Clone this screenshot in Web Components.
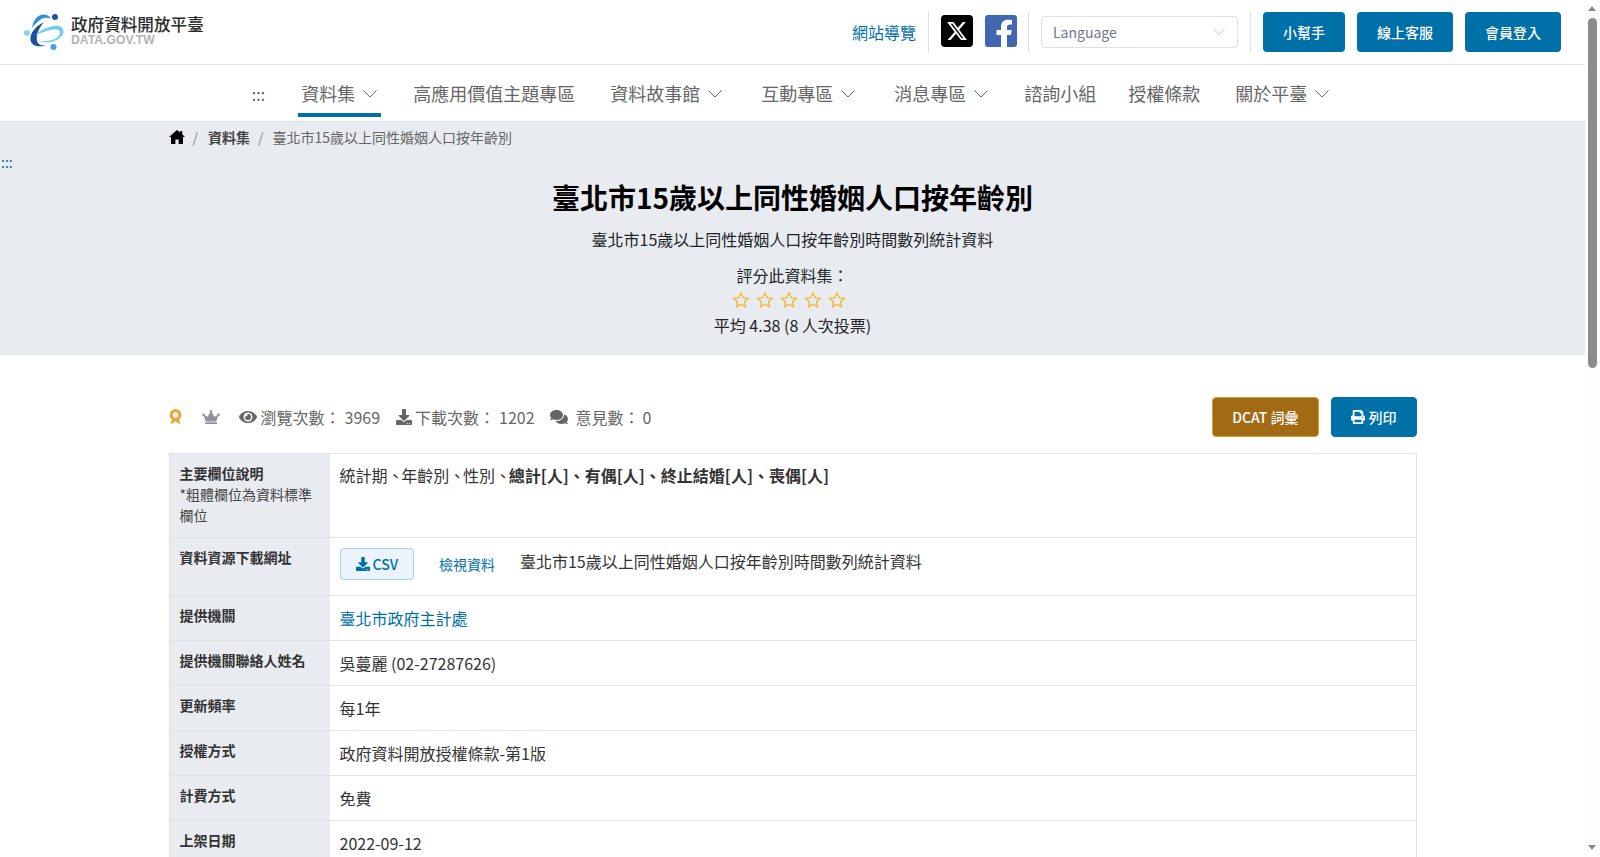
<!DOCTYPE html>
<html lang="zh-Hant"><head><meta charset="utf-8"><title>臺北市15歲以上同性婚姻人口按年齡別</title>
<style>
body{margin:0;padding-right:15px;font-family:"Noto Sans CJK TC","Noto Sans",sans-serif;color:#212529;background:#fff;font-size:16px}
</style></head><body>
<site-header></site-header>
<main-nav></main-nav>
<page-hero></page-hero>
<data-detail></data-detail>
<page-scrollbar></page-scrollbar>
<script>
const F='"Noto Sans CJK TC","Noto Sans",sans-serif';
const I={
 home:['0 0 16 14','M8 0l3.200 2.600V1h2v3.200L16 7h-2v7H9.600V9.400H6.400V14H2V7H0z'],
 eye:['0 0 576 512','M572.52 241.4C518.29 135.59 410.93 64 288 64S57.68 135.64 3.48 241.41a32.35 32.35 0 0 0 0 29.19C57.71 376.41 165.07 448 288 448s230.32-71.64 284.52-177.41a32.35 32.35 0 0 0 0-29.19zM288 400a144 144 0 1 1 144-144 143.93 143.93 0 0 1-144 144zm0-240a95.31 95.31 0 0 0-25.31 3.79 47.85 47.85 0 0 1-66.9 66.9A95.78 95.78 0 1 0 288 160z'],
 download:['0 0 512 512','M216 0h80c13.3 0 24 10.7 24 24v168h87.7c17.8 0 26.7 21.5 14.1 34.1L269.7 378.3c-7.5 7.5-19.8 7.5-27.3 0L90.1 226.1c-12.6-12.6-3.7-34.1 14.1-34.1H192V24c0-13.3 10.7-24 24-24zm296 376v112c0 13.3-10.7 24-24 24H24c-13.3 0-24-10.7-24-24V376c0-13.3 10.7-24 24-24h146.7l49 49c20.1 20.1 52.5 20.1 72.6 0l49-49H488c13.3 0 24 10.7 24 24zm-124 88c0-11-9-20-20-20s-20 9-20 20 9 20 20 20 20-9 20-20zm64 0c0-11-9-20-20-20s-20 9-20 20 9 20 20 20 20-9 20-20z'],
 comments:['0 0 576 512','M416 192c0-88.4-93.1-160-208-160S0 103.6 0 192c0 34.3 14.1 65.9 38 92-13.4 30.2-35.5 54.2-35.8 54.5-2.2 2.3-2.8 5.7-1.5 8.7S4.8 352 8 352c36.6 0 66.9-12.3 88.7-25 32.2 15.7 70.3 25 111.3 25 114.9 0 208-71.6 208-160zm122 220c23.9-26 38-57.7 38-92 0-66.9-53.5-124.2-129.3-148.1.9 6.6 1.3 13.3 1.3 20.1 0 105.9-107.7 192-240 192-10.8 0-21.3-.8-31.7-1.9C207.8 439.6 281.8 480 368 480c41 0 79.1-9.2 111.3-25 21.8 12.7 52.1 25 88.7 25 3.2 0 6.1-1.9 7.3-4.8 1.3-2.9.7-6.3-1.5-8.7-.3-.3-22.4-24.2-35.8-54.5z'],
 print:['0 0 512 512','M448 192V77.25c0-8.49-3.37-16.62-9.37-22.63L393.37 9.37c-6-6-14.14-9.37-22.63-9.37H96C78.33 0 64 14.33 64 32v160c-35.35 0-64 28.65-64 64v112c0 8.84 7.16 16 16 16h48v96c0 17.67 14.33 32 32 32h320c17.67 0 32-14.33 32-32v-96h48c8.84 0 16-7.16 16-16V256c0-35.35-28.65-64-64-64zm-64 256H128v-96h256v96zm0-224H128V64h192v48c0 8.84 7.16 16 16 16h48v96zm48 72c-13.25 0-24-10.75-24-24 0-13.26 10.75-24 24-24s24 10.74 24 24c0 13.25-10.75 24-24 24z'],
 crown:['0 0 640 512','M528 448H112c-8.8 0-16 7.2-16 16v32c0 8.8 7.2 16 16 16h416c8.8 0 16-7.2 16-16v-32c0-8.8-7.2-16-16-16zm64-320c-26.5 0-48 21.5-48 48 0 7.1 1.6 13.7 4.4 19.8L476 239.2c-15.4 9.2-35.3 4-44.2-11.6L350.3 85C361 76.2 368 63 368 48c0-26.5-21.5-48-48-48s-48 21.5-48 48c0 15 7 28.2 17.7 37l-81.5 142.6c-8.9 15.6-28.9 20.8-44.2 11.6l-72.3-43.4c2.7-6 4.4-12.8 4.4-19.8 0-26.5-21.5-48-48-48S0 149.5 0 176s21.5 48 48 48c2.6 0 5.2-.4 7.7-.8L128 416h384l72.3-192.8c2.5.4 5.1.8 7.7.8 26.5 0 48-21.5 48-48s-21.5-48-48-48z']
};
const icon=(n,w,h)=>`<svg width="${w}" height="${h}" viewBox="${I[n][0]}" fill="currentColor" aria-hidden="true"><path d="${I[n][1]}"/></svg>`;
const chev=(c='#666',w=14)=>`<svg width="${w}" height="8" viewBox="0 0 14 8" fill="none" stroke="${c}" stroke-width="1"><path d="M.5.5 7 7 13.5.5"/></svg>`;
class Base extends HTMLElement{
 constructor(){super();this.attachShadow({mode:'open'}).innerHTML=this.html()}
}
customElements.define('page-scrollbar',class extends Base{html(){return `<style>
:host{display:block;position:fixed;top:0;right:0;width:15px;height:857px;background:#fdfdfd}
.u,.d{position:absolute;left:3px;width:0;height:0;border-left:4.5px solid transparent;border-right:4.5px solid transparent}
.u{top:6px;border-bottom:5px solid #8c8c8c}
.d{top:845px;border-top:5px solid #8c8c8c}
.t{position:absolute;left:3px;top:18px;width:9px;height:350px;background:#8c8c8c;border-radius:5px}
</style><div class="u"></div><div class="t"></div><div class="d"></div>`}});
customElements.define('site-header',class extends Base{html(){return `<style>
:host{display:block;border-bottom:1px solid #dcdfe8;height:64px;box-sizing:content-box}
.bar{display:flex;align-items:center;height:64px;padding:0 24px}
.logo{display:flex;align-items:center;gap:7px;text-decoration:none}
.lt{display:flex;flex-direction:column;margin-top:-2px}
.n{font-size:16.6px;line-height:19px;color:#2b2b2b;font-weight:500;white-space:nowrap}
.d{font:bold 12.2px/13px "Liberation Sans",sans-serif;color:#b4b4b4}
.right{margin-left:auto;display:flex;align-items:center}
a{text-decoration:none}
.map{color:#0070a8;font-size:16px;margin-right:12px}
.sep{width:1px;height:40px;background:#dcdfe8}
.soc{display:flex;gap:12px;margin:0 11px 2px 12px;align-items:center}
.sel{width:197px;height:32px;box-sizing:border-box;border:1px solid #dcdfe8;border-radius:4px;margin:0 12px;display:flex;align-items:center;justify-content:space-between;padding:0 12px 0 11px;color:#757885;font-size:14px}
button{font:500 14px ${F};height:40px;padding:0 20px;border:0;background:#0070a8;color:#fff;border-radius:4px;margin-left:12px}
</style><div class="bar">
<a class="logo" href="#"><svg width="40" height="36" viewBox="0 0 40 36" aria-hidden="true">
<path d="M8 14C9 7 13 1 19 .5c3-.3 6 1 8 4-4-1.500-8-1-11 1.500-3 2.500-6 5-8 8z" fill="#2f8fd6"/>
<path d="M20 8C12 12 5.500 19 6.500 26c.6 4.500 5.500 8 15.500 5.500-5 .4-8-1-9-4.500-1.300-6 2-13 7-19z" fill="#1b4fa3"/>
<path d="M11 21c6-5 12-8 19-9 6-.8 10 2 9.500 6-.5 5-7 9-13 10-4 .6-8 .3-11-1 5 .4 10 0 14-1.500 4-1.500 7-4.500 6.500-7.500-.6-3-5-3.500-10-2-5 1.300-10 3-15 5z" fill="#6ccbee"/>
<circle cx="31" cy="3" r="3" fill="#2353a6"/><circle cx="3" cy="19" r="3" fill="#8bd3f0"/><circle cx="29.500" cy="33" r="3" fill="#4a9fe0"/>
</svg><span class="lt"><span class="n">政府資料開放平臺</span><span class="d">DATA.GOV.TW</span></span></a>
<div class="right"><a class="map" href="#">網站導覽</a><span class="sep"></span>
<span class="soc"><svg width="32" height="32" viewBox="0 0 32 32" aria-label="X"><rect width="32" height="32" rx="4" fill="#000"/><g transform="translate(5 5) scale(.92)"><path fill="#fff" d="M18.244 2.25h3.308l-7.227 8.26 8.502 11.24H16.17l-5.214-6.817L4.99 21.75H1.68l7.73-8.835L1.254 2.25H8.08l4.713 6.231zm-1.161 17.52h1.833L7.084 4.126H5.117z"/></g></svg>
<svg width="32" height="32" viewBox="0 0 32 32" aria-label="Facebook"><rect width="32" height="32" rx="3" fill="#4267b2"/><path fill="#fff" d="M22 32V20h4l.7-5H22v-3c0-1.500.7-2.600 2.800-2.600H27V5.100C26 5 24.600 4.800 23 4.800c-4.300 0-7 2.500-7 7V15h-4.500v5H16v12z"/></svg></span>
<span class="sep"></span><span class="sel">Language ${chev('#bbbfcb',12)}</span><span class="sep"></span>
<button>小幫手</button><button>線上客服</button><button>會員登入</button></div></div>`}});
customElements.define('nav-item',class extends Base{html(){const c=this.hasAttribute('drop'),a=this.hasAttribute('active');return `<style>
:host{display:block;margin-left:var(--ml,32px)}
a{display:flex;align-items:center;gap:8px;height:52px;padding:8px ${c?4:3}px 0 3px;box-sizing:border-box;color:#666;font-size:18px;text-decoration:none;white-space:nowrap;border-bottom:4px solid ${a?'#0070a8':'transparent'}}
svg{margin-top:2px}
</style><a href="#"><slot></slot>${c?chev('#666'):''}</a>`}});
customElements.define('main-nav',class extends Base{html(){return `<style>
:host{display:block;border-bottom:1px solid #dcdfe8}
nav{display:flex;justify-content:center;height:56px}
nav>span{align-self:center;color:#555;font-size:16px;margin-top:2px}
</style><nav><span>:::</span>
<nav-item drop active style="--ml:33px">資料集</nav-item><nav-item style="--ml:29px">高應用價值主題專區</nav-item><nav-item drop style="--ml:29px">資料故事館</nav-item><nav-item drop style="--ml:32px">互動專區</nav-item><nav-item drop style="--ml:32px">消息專區</nav-item><nav-item style="--ml:29px">諮詢小組</nav-item><nav-item style="--ml:26px">授權條款</nav-item><nav-item drop style="--ml:29px">關於平臺</nav-item></nav>`}});
customElements.define('star-rate',class extends Base{html(){const s=`<svg width="18" height="18" viewBox="0 0 24 24" fill="none" stroke="#f6b92c" stroke-width="1.7" stroke-linejoin="round"><path d="M12 2.500l2.900 6.300 6.800.8-5 4.700 1.300 6.800-6-3.400-6 3.400 1.300-6.800-5-4.700 6.800-.8z"/></svg>`;return `<style>:host{display:flex;justify-content:center;gap:6px;padding-right:8px}svg{display:block}</style>${s.repeat(5)}`}});
customElements.define('page-hero',class extends Base{html(){return `<style>
:host{display:block;background:#e8ebf0;height:233px;position:relative;text-align:center}
.bc{display:flex;align-items:center;width:1248px;margin:0 auto;height:30px;font-size:14px;color:#666;text-align:left}
.bc svg{color:#000;display:block}
.bc i{font-style:normal;color:#888;margin:0 10px 0 8px}
.bc i:last-of-type{margin-right:9px}
.bc b{color:#444;font-weight:700}
.skip{position:absolute;left:1px;top:31px;color:#0070a8;font-size:14px;line-height:18px;text-decoration:none}
h1{font-size:28px;line-height:42px;margin:24px 0 0;color:#000;font-weight:700}
p{margin:0;line-height:24px;color:#212529}
.s{margin-top:9px}.r{margin-top:12px}
star-rate{margin:4px 0 4px}
</style><div class="bc">${icon('home',16,14)}<i>/</i><b>資料集</b><i>/</i><span>臺北市15歲以上同性婚姻人口按年齡別</span></div>
<a class="skip" href="#">:::</a>
<h1>臺北市15歲以上同性婚姻人口按年齡別</h1>
<p class="s">臺北市15歲以上同性婚姻人口按年齡別時間數列統計資料</p>
<p class="r">評分此資料集：</p><star-rate></star-rate><p>平均 4.38 (8 人次投票)</p>`}});
customElements.define('info-row',class extends Base{html(){return `<style>
:host{display:grid;grid-template-columns:160px 1fr;border-bottom:1px solid #dee2e6;min-height:44px}
.h{background:#e8ebf0;padding:8.5px 10px 11.5px;font-size:14px;line-height:21px;font-weight:700;color:#333;box-sizing:border-box}
.v{padding:10px 10px 10px;font-size:16px;line-height:24px;color:#333;box-sizing:border-box;display:flex;flex-wrap:wrap;align-items:flex-start}
::slotted([slot=sub]){display:block;font-weight:400;color:#444}
</style><div class="h">${this.getAttribute('label')}<slot name="sub"></slot></div><div class="v"><slot></slot></div>`}});
customElements.define('data-detail',class extends Base{html(){return `<style>
:host{display:block;width:1248px;margin:0 auto;padding:42px 0 0;height:1646px;box-sizing:border-box}
.stats{display:flex;align-items:center;height:40px;color:#666;margin-bottom:16px}
.stats svg{display:block}
.st{display:flex;align-items:center;gap:3px;margin-right:16px;white-space:nowrap}
.st b{font-weight:400;margin-left:0}
.btns{margin-left:auto;display:flex;gap:12px}
button{font:500 14px ${F};height:40px;border-radius:4px;color:#fff;background:#0070a8;border:1px solid #0070a8;padding:0 19px;display:flex;align-items:center;gap:4px}
button.d{background:#a36a14;border-color:#e09b35}
.t{border:1px solid #dee2e6;border-bottom:0}
a{color:#0070a8;text-decoration:none}
.csv{display:inline-flex;align-items:center;gap:3px;height:32px;box-sizing:border-box;border:1px solid #a8d0ef;background:#ebf4fc;border-radius:4px;padding:0 15px;font-size:14px;font-weight:500;color:#0070a8;margin:0 25px 5px 0}
.view{font-size:14px;margin:0 25px 0 0;line-height:33px}
.ttl{margin-top:.5px}
.first{margin-top:-1px}
.p{letter-spacing:-2.3px}
</style>
<div class="stats">
<svg width="13" height="16" viewBox="0 0 13 16" style="margin-right:20px" aria-hidden="true"><path d="M3 10 1.500 15l3-1 2-2 2 2 3 1L10 10z" fill="#efa536"/><circle cx="6.500" cy="6" r="4.300" fill="none" stroke="#efa536" stroke-width="3.200"/></svg>
<span style="color:#8f929c;margin-right:19px">${icon('crown',18,14)}</span>
<span class="st" style="gap:4px">${icon('eye',18,16)}瀏覽次數：<b>3969</b></span>
<span class="st" style="margin-right:14px">${icon('download',16,16)}下載次數：<b style="margin-left:1px">1202</b></span>
<span class="st" style="gap:7px">${icon('comments',20,16)}意見數：<b style="margin-left:-4px">0</b></span>
<span class="btns"><button class="d">DCAT 詞彙</button><button>${icon('print',14,14)}列印</button></span></div>
<div class="t">
<info-row label="主要欄位說明"><span slot="sub">*粗體欄位為資料標準欄位</span><span class="first">統計期<span class="p">、</span>年齡別<span class="p">、</span>性別<span class="p">、</span><strong>總計[人]、有偶[人]、終止結婚[人]、喪偶[人]</strong></span></info-row>
<info-row label="資料資源下載網址"><a class="csv" href="#">${icon('download',14,14)}CSV</a><a class="view" href="#">檢視資料</a><span class="ttl">臺北市15歲以上同性婚姻人口按年齡別時間數列統計資料</span></info-row>
<info-row label="提供機關"><a href="#">臺北市政府主計處</a></info-row>
<info-row label="提供機關聯絡人姓名">吳蔓麗 (02-27287626)</info-row>
<info-row label="更新頻率">每1年</info-row>
<info-row label="授權方式">政府資料開放授權條款-第1版</info-row>
<info-row label="計費方式">免費</info-row>
<info-row label="上架日期">2022-09-12</info-row>
</div>`}});
</script></body></html>
